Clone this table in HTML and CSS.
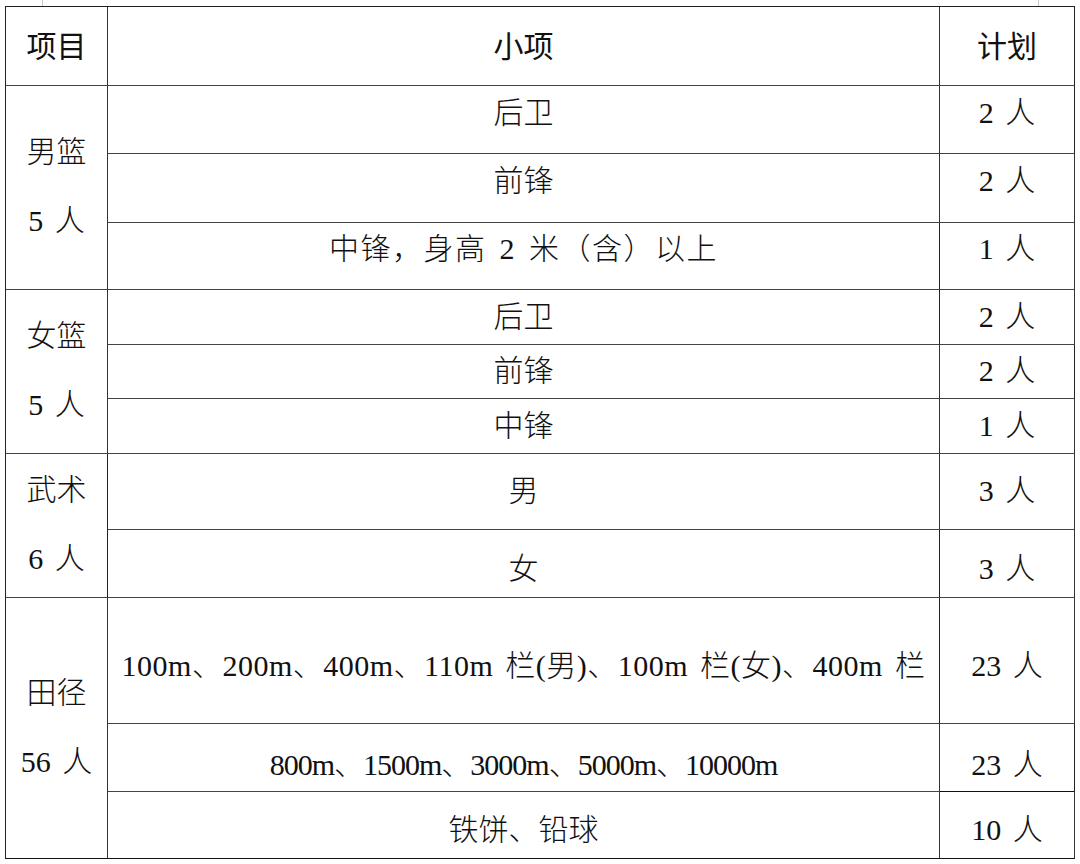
FILE: index.html
```html
<!DOCTYPE html>
<html lang="zh">
<head>
<meta charset="utf-8">
<title>招生计划</title>
<link rel="stylesheet" href="styles.css">
</head>
<body>
<div class="marks"><span class="mark"></span><span class="mark"></span></div>
<div class="sheet">
  <div class="cell head">项目</div>
  <div class="cell head">小项</div>
  <div class="cell head">计划</div>

  <div class="cell group g1"><span>男篮</span><span>5 人</span></div>
  <div class="cell up">后卫</div><div class="cell up">2 人</div>
  <div class="cell up">前锋</div><div class="cell up">2 人</div>
  <div class="cell up wide">中锋，身高 2 米（含）以上</div><div class="cell up">1 人</div>

  <div class="cell group g2"><span>女篮</span><span>5 人</span></div>
  <div class="cell">后卫</div><div class="cell">2 人</div>
  <div class="cell">前锋</div><div class="cell">2 人</div>
  <div class="cell">中锋</div><div class="cell">1 人</div>

  <div class="cell group g3"><span>武术</span><span>6 人</span></div>
  <div class="cell">男</div><div class="cell">3 人</div>
  <div class="cell down">女</div><div class="cell down">3 人</div>

  <div class="cell group g4"><span>田径</span><span>56 人</span></div>
  <div class="cell down loose">100m、200m、400m、110m 栏(男)、100m 栏(女)、400m 栏</div><div class="cell down">23 人</div>
  <div class="cell down2 tight">800m、1500m、3000m、5000m、10000m</div><div class="cell down2">23 人</div>
  <div class="cell down">铁饼、铅球</div><div class="cell down">10 人</div>
</div>
</body>
</html>
```
FILE: styles.css
```css
html, body {
  margin: 0;
  padding: 0;
  background: #ffffff;
}
body {
  width: 1080px;
  height: 864px;
  overflow: hidden;
  font-family: "Liberation Serif", "Noto Sans CJK SC", serif;
  font-size: 30px;
  color: #111;
}
.marks {
  height: 6px;
  display: flex;
  justify-content: space-between;
  padding: 0 41px 0 42px;
}
.mark {
  width: 1px;
  height: 6px;
  background: #c8c8c8;
}
.sheet {
  margin-left: 5px;
  width: 1070px;
  box-sizing: border-box;
  border-top: 1px solid #222;
  border-left: 1px solid #222;
  display: grid;
  grid-template-columns: 102px 832px 135px;
  grid-template-rows: 79px 68px 69px 67px 55px 54px 55px 76px 68px 126px 68px 67px;
}
.cell {
  box-sizing: border-box;
  border-right: 1px solid #333;
  border-bottom: 1px solid #444;
  display: flex;
  align-items: center;
  justify-content: center;
  white-space: nowrap;
  word-spacing: 4px;
  font-weight: 300;
  padding-bottom: 7px;
}
.cell:nth-child(3n) {
  border-right-color: #222;
}
.head {
  font-weight: 400;
  padding-bottom: 4px;
}
.group {
  flex-direction: column;
  line-height: 69px;
  padding-bottom: 3px;
}
.g1 { grid-row: span 3; }
.g2 { grid-row: span 3; }
.g3 { grid-row: span 2; }
.g4 { grid-row: span 3; }
.up { padding-bottom: 20px; }
.down { padding-top: 4px; padding-bottom: 0; }
.down2 { padding-top: 9px; padding-bottom: 0; }
.wide { letter-spacing: 1.5px; }
.loose { letter-spacing: 0.5px; }
.tight { letter-spacing: -1px; }
.sheet > .cell:nth-last-child(-n+3) {
  border-bottom: 1px solid #111;
}
.g4 { border-bottom: 1px solid #111; }
```
